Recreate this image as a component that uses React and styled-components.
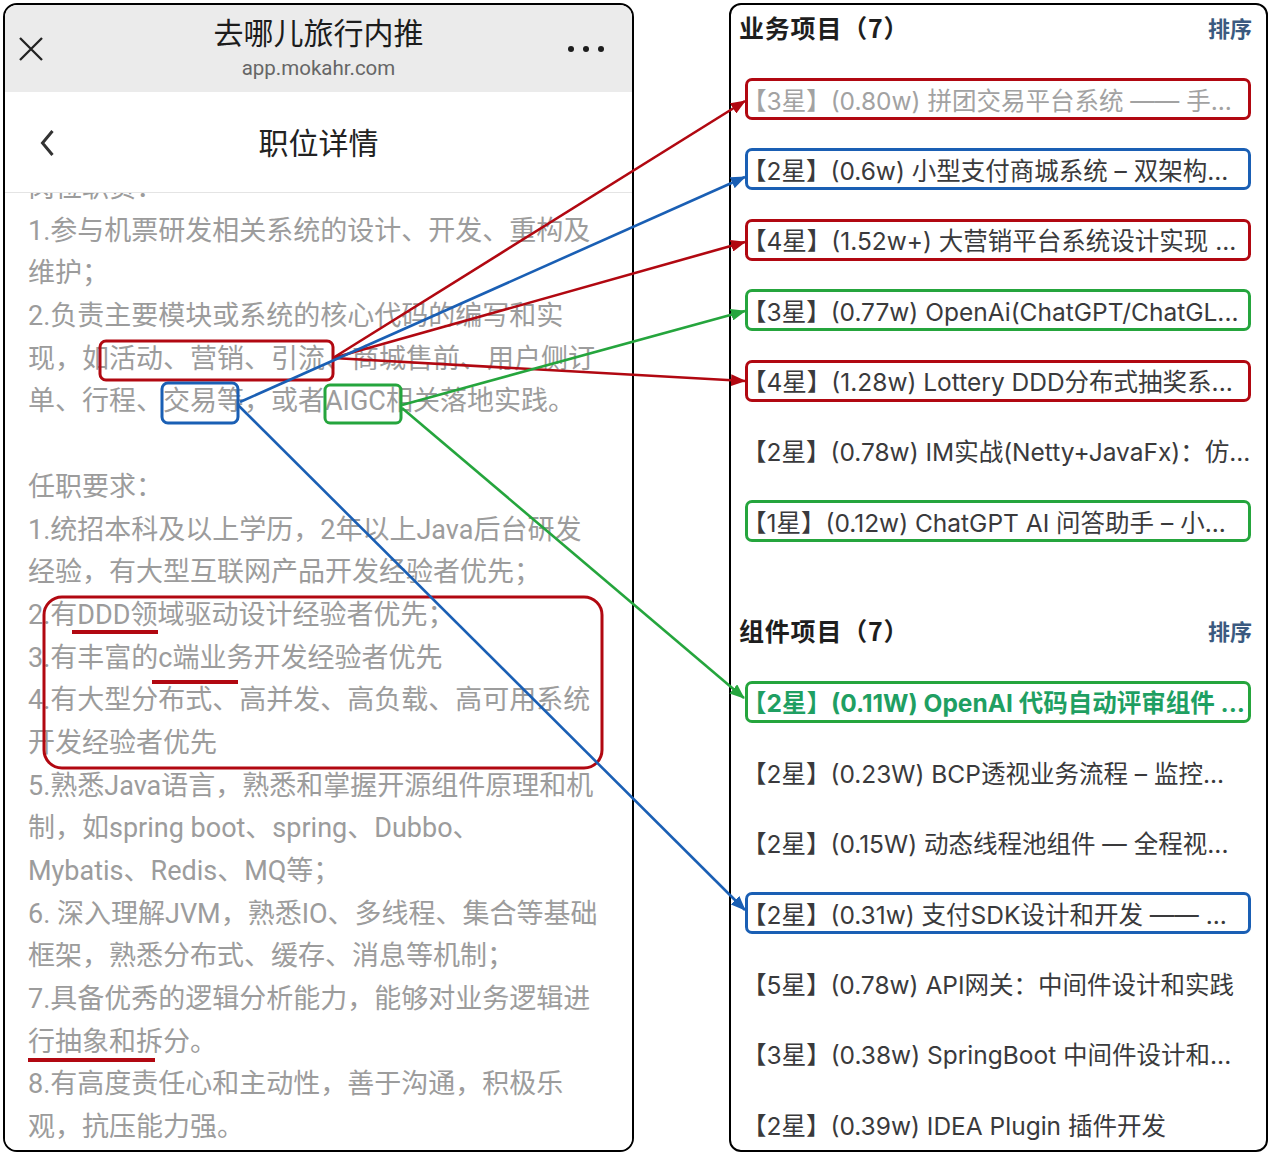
import styled, { createGlobalStyle } from 'styled-components';

const GlobalStyle = createGlobalStyle`
  html, body {
    margin: 0;
    background: #ffffff;
  }
`;

const RED = '#b10811';
const BLUE = '#1a5fb4';
const GREEN = '#25a53d';

const Page = styled.div`
  position: relative;
  width: 1278px;
  height: 1156px;
  box-sizing: border-box;
  padding: 3px 0 0 3px;
  display: flex;
  gap: 95px;
  overflow: hidden;
`;

/* ---------- phone screenshot ---------- */

const Phone = styled.div`
  width: 631px;
  height: 1149px;
  box-sizing: border-box;
  border: 2px solid #000;
  border-radius: 14px;
  overflow: hidden;
  display: flex;
  flex-direction: column;
  font-family: Roboto, "Noto Sans CJK SC", sans-serif;
`;

const TopBar = styled.div`
  height: 87px;
  flex-shrink: 0;
  background: #ebebeb;
  display: grid;
  grid-template-columns: 90px 1fr 90px;
`;

const CloseCell = styled.div`
  padding: 31px 0 0 13px;
`;

const MoreCell = styled.div`
  padding: 41px 28px 0 0;
  display: flex;
  justify-content: flex-end;
  gap: 9px;
`;

const Dot = styled.span`
  width: 6px;
  height: 6px;
  border-radius: 50%;
  background: #1d1d1d;
`;

const TitleBlock = styled.div`
  padding-top: 11px;
  text-align: center;
`;

const Title = styled.div`
  font-size: 30px;
  line-height: 36px;
  color: #1c1c1c;
`;

const Host = styled.div`
  margin-top: 3px;
  font-size: 20.5px;
  line-height: 26px;
  color: #666;
`;

const NavBar = styled.div`
  height: 101px;
  flex-shrink: 0;
  box-sizing: border-box;
  border-bottom: 1px solid #e4e4e4;
  background: #fff;
  display: grid;
  grid-template-columns: 90px 1fr 90px;
  align-items: center;
`;

const BackCell = styled.div`
  padding: 2px 0 0 35px;
  display: flex;
`;

const NavTitle = styled.div`
  text-align: center;
  font-size: 30px;
  color: #222;
  margin-top: -2px;
`;

const Body = styled.div`
  flex: 1;
  overflow: hidden;
  background: #fff;
`;

const TextBlock = styled.div`
  margin-top: -26px;
  padding-left: 23px;
`;

const Line = styled.div`
  height: 42.7px;
  line-height: 42.7px;
  font-size: 27px;
  color: #9c9c9c;
  white-space: nowrap;
`;

/* ---------- project list ---------- */

const Panel = styled.div`
  width: 539px;
  height: 1149px;
  box-sizing: border-box;
  border: 2px solid #000;
  border-radius: 12px;
  font-family: Inter, "Noto Sans CJK SC", sans-serif;
`;

const Section = styled.section`
  margin-top: ${p => p.$offset}px;
`;

const SectionHead = styled.div`
  height: 44px;
  padding: 0 14px 0 8px;
  display: flex;
  align-items: center;
  justify-content: space-between;
`;

const SectionTitle = styled.h2`
  margin: 0;
  font-family: "Noto Sans CJK SC", sans-serif;
  font-size: 25px;
  font-weight: 700;
  letter-spacing: 0.8px;
  color: #1e1e1e;
`;

const SortLink = styled.span`
  font-family: "Noto Sans CJK SC", sans-serif;
  font-size: 22px;
  font-weight: 700;
  color: #3b5a80;
`;

const List = styled.div`
  margin: 29px 15px 0 14px;
  display: flex;
  flex-direction: column;
  gap: 28.4px;
`;

const toneColor = { red: RED, blue: BLUE, green: GREEN };

const Item = styled.div`
  height: 42px;
  box-sizing: border-box;
  border: 3px solid ${p => toneColor[p.$tone] || 'transparent'};
  border-radius: 7px;
  padding: 0 4px 0 0;
  text-indent: -6px;
  display: flex;
  align-items: center;
  white-space: nowrap;
  font-size: 24.5px;
  font-weight: ${p => (p.$accent ? 700 : 400)};
  color: ${p => (p.$accent ? '#1f9f62' : p.$muted ? '#a2a2a2' : '#3a3a3c')};
`;

/* ---------- annotation layer ---------- */

const Overlay = styled.svg`
  position: absolute;
  left: 0;
  top: 0;
  pointer-events: none;
  z-index: 2;
`;

const lines = [
  '岗位职责：',
  '1.参与机票研发相关系统的设计、开发、重构及',
  '维护；',
  '2.负责主要模块或系统的核心代码的编写和实',
  '现，如活动、营销、引流、商城售前、用户侧订',
  '单、行程、交易等，或者AIGC相关落地实践。',
  '',
  '任职要求：',
  '1.统招本科及以上学历，2年以上Java后台研发',
  '经验，有大型互联网产品开发经验者优先；',
  '2.有DDD领域驱动设计经验者优先；',
  '3.有丰富的c端业务开发经验者优先',
  '4.有大型分布式、高并发、高负载、高可用系统',
  '开发经验者优先',
  '5.熟悉Java语言，熟悉和掌握开源组件原理和机',
  '制，如spring boot、spring、Dubbo、',
  'Mybatis、Redis、MQ等；',
  '6. 深入理解JVM，熟悉IO、多线程、集合等基础',
  '框架，熟悉分布式、缓存、消息等机制；',
  '7.具备优秀的逻辑分析能力，能够对业务逻辑进',
  '行抽象和拆分。',
  '8.有高度责任心和主动性，善于沟通，积极乐',
  '观，抗压能力强。',
];

const business = [
  { text: '【3星】(0.80w) 拼团交易平台系统 —— 手...', tone: 'red', muted: true },
  { text: '【2星】(0.6w) 小型支付商城系统 – 双架构...', tone: 'blue' },
  { text: '【4星】(1.52w+) 大营销平台系统设计实现 ...', tone: 'red' },
  { text: '【3星】(0.77w) OpenAi(ChatGPT/ChatGL...', tone: 'green' },
  { text: '【4星】(1.28w) Lottery DDD分布式抽奖系...', tone: 'red' },
  { text: '【2星】(0.78w) IM实战(Netty+JavaFx)：仿...' },
  { text: '【1星】(0.12w) ChatGPT AI 问答助手 – 小...', tone: 'green' },
];

const components = [
  { text: '【2星】(0.11W) OpenAI 代码自动评审组件 ...', tone: 'green', accent: true },
  { text: '【2星】(0.23W) BCP透视业务流程 – 监控...' },
  { text: '【2星】(0.15W) 动态线程池组件 — 全程视...' },
  { text: '【2星】(0.31w) 支付SDK设计和开发 —— ...', tone: 'blue' },
  { text: '【5星】(0.78w) API网关：中间件设计和实践' },
  { text: '【3星】(0.38w) SpringBoot 中间件设计和...' },
  { text: '【2星】(0.39w) IDEA Plugin 插件开发' },
];

// arrows from highlighted words to projects
const arrows = [
  { c: 'red', x1: 333, y1: 358, x2: 745, y2: 101 },
  { c: 'red', x1: 333, y1: 358, x2: 745, y2: 242 },
  { c: 'red', x1: 333, y1: 358, x2: 745, y2: 381 },
  { c: 'blue', x1: 240, y1: 402, x2: 745, y2: 177 },
  { c: 'blue', x1: 238, y1: 405, x2: 745, y2: 910 },
  { c: 'green', x1: 402, y1: 405, x2: 745, y2: 311 },
  { c: 'green', x1: 402, y1: 408, x2: 744, y2: 698 },
];

function Annotations() {
  return (
    <Overlay width="1278" height="1156" viewBox="0 0 1278 1156">
      <defs>
        {Object.entries(toneColor).map(([k, col]) => (
          <marker key={k} id={`head-${k}`} markerUnits="userSpaceOnUse" markerWidth="15" markerHeight="12"
            refX="14" refY="6" orient="auto">
            <path d="M0,0 L15,6 L0,12 z" fill={col} />
          </marker>
        ))}
      </defs>
      <g fill="none" strokeWidth="3">
        <rect x="100" y="341" width="233" height="39" rx="6" stroke={RED} />
        <rect x="162" y="383" width="76" height="40" rx="6" stroke={BLUE} />
        <rect x="325" y="385" width="76" height="38" rx="5" stroke={GREEN} />
        <rect x="44" y="597" width="558" height="171" rx="18" stroke={RED} />
      </g>
      <g stroke={RED} strokeWidth="4">
        <line x1="72" y1="632" x2="158" y2="632" />
        <line x1="152" y1="682" x2="238" y2="682" />
        <line x1="28" y1="1060" x2="155" y2="1060" />
      </g>
      {arrows.map((a, i) => (
        <line key={i} x1={a.x1} y1={a.y1} x2={a.x2} y2={a.y2}
          stroke={toneColor[a.c]} strokeWidth="2.6" markerEnd={`url(#head-${a.c})`} />
      ))}
    </Overlay>
  );
}

function ProjectSection({ title, items, offset }) {
  return (
    <Section $offset={offset}>
      <SectionHead>
        <SectionTitle>{title}</SectionTitle>
        <SortLink>排序</SortLink>
      </SectionHead>
      <List>
        {items.map((it, i) => (
          <Item key={i} $tone={it.tone} $muted={it.muted} $accent={it.accent}>{it.text}</Item>
        ))}
      </List>
    </Section>
  );
}

export default function App() {
  return (
    <Page>
      <GlobalStyle />
      <Phone>
        <TopBar>
          <CloseCell>
            <svg width="26" height="26" viewBox="0 0 26 26">
              <path d="M2 2 L24 24 M24 2 L2 24" stroke="#222" strokeWidth="2.3" />
            </svg>
          </CloseCell>
          <TitleBlock>
            <Title>去哪儿旅行内推</Title>
            <Host>app.mokahr.com</Host>
          </TitleBlock>
          <MoreCell>
            <Dot />
            <Dot />
            <Dot />
          </MoreCell>
        </TopBar>
        <NavBar>
          <BackCell>
            <svg width="15" height="28" viewBox="0 0 15 28">
              <path d="M12.5 2 L2.5 14 L12.5 26" fill="none" stroke="#333" strokeWidth="3" />
            </svg>
          </BackCell>
          <NavTitle>职位详情</NavTitle>
        </NavBar>
        <Body>
          <TextBlock>
            {lines.map((l, i) => (
              <Line key={i}>{l}</Line>
            ))}
          </TextBlock>
        </Body>
      </Phone>
      <Panel>
        <ProjectSection title="业务项目（7）" items={business} offset={0} />
        <ProjectSection title="组件项目（7）" items={components} offset={65.6} />
      </Panel>
      <Annotations />
    </Page>
  );
}
